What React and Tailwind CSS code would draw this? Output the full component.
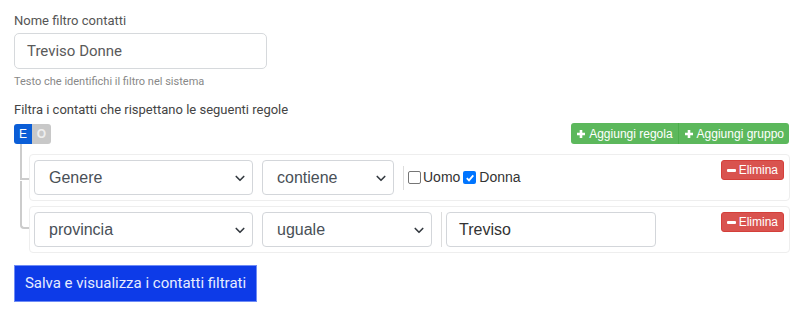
import React from "react";

const roboto = { fontFamily: "Roboto, 'Liberation Sans', sans-serif" };
const arial = { fontFamily: "'Liberation Sans', Arial, sans-serif" };

function Chevron() {
  return (
    <svg width="12" height="12" viewBox="0 0 16 16" className="shrink-0">
      <path d="M3 6l5 5 5-5" fill="none" stroke="#343a40" strokeWidth="2.2" strokeLinecap="round" strokeLinejoin="round" />
    </svg>
  );
}

function FakeSelect({ value, width }) {
  return (
    <div
      className={`flex items-center justify-between h-[35px] pl-[14px] pr-[6px] border border-[#d3d6da] rounded-[4px] bg-white text-[16px] text-[#495057] ${width}`}
      style={arial}
    >
      <span>{value}</span>
      <Chevron />
    </div>
  );
}

function DeleteButton() {
  return (
    <button
      className="flex items-center gap-[3px] h-[20px] px-[5px] rounded-[3px] bg-[#d9534f] border border-[#d43f3a] text-white text-[12px]"
      style={arial}
    >
      <span className="block w-[9px] h-[3px] bg-white rounded-[1px]" />
      Elimina
    </button>
  );
}

function Plus() {
  return (
    <svg width="10" height="10" viewBox="0 0 10 10">
      <path d="M5 1v8M1 5h8" stroke="white" strokeWidth="2.6" />
    </svg>
  );
}

function RuleRow({ children, last }) {
  return (
    <div className="relative">
      <div
        className={`absolute left-[-9px] w-[9px] border-l-2 border-b-2 border-[#cccccc] ${
          last ? "top-[-25px] h-[48px] rounded-bl-[4px]" : "top-[-10px] h-[36px]"
        }`}
      />
      <div className="flex items-start justify-between h-[47px] pl-[4px] pr-[5px] pt-[5px] border border-[#eeeeee] rounded-[4px] bg-white">
        <div className="flex items-center gap-[9px]">{children}</div>
        <DeleteButton />
      </div>
    </div>
  );
}

export default function App() {
  return (
    <div className="w-[800px] h-[313px] bg-white px-[14px] pt-[12px]" style={roboto}>
      <label className="block text-[13px] text-[#555] leading-[18px]">Nome filtro contatti</label>
      <div className="mt-[3px] w-[253px] h-[36px] border border-[#d6d9dc] rounded-[5px] flex items-center px-[12px] text-[15px] text-[#5a5a5a]">
        Treviso Donne
      </div>
      <p className="mt-[5px] text-[11px] text-[#888] leading-[16px]">Testo che identifichi il filtro nel sistema</p>
      <p className="mt-[11px] text-[13px] text-[#444] leading-[18px]">Filtra i contatti che rispettano le seguenti regole</p>

      <div className="mt-[4px] flex items-center justify-between w-[775px]">
        <div className="flex h-[20px] rounded-[3px] overflow-hidden text-[12px]" style={arial}>
          <span className="w-[18px] bg-[#0b5ed7] text-white flex items-center justify-center">E</span>
          <span className="w-[19px] bg-[#c8c8c8] text-[#eee] flex items-center justify-center font-bold">O</span>
        </div>
        <div className="flex h-[21px] rounded-[3px] overflow-hidden text-[12px] text-white" style={arial}>
          <button className="flex items-center gap-[3px] px-[5px] bg-[#5cb85c] border-r border-[#4cae4c]">
            <Plus />
            Aggiungi regola
          </button>
          <button className="flex items-center gap-[3px] px-[5px] bg-[#5cb85c]">
            <Plus />
            Aggiungi gruppo
          </button>
        </div>
      </div>

      <div className="relative ml-[15px] mt-[10px] w-[761px] flex flex-col gap-[5px]">
        <RuleRow>
          <FakeSelect value="Genere" width="w-[219px]" />
          <FakeSelect value="contiene" width="w-[132px]" />
          <div className="flex items-center gap-[3px] border-l border-[#ddd] pl-[4px] h-[24px] text-[14px] text-[#333]" style={arial}>
            <span className="inline-flex items-center gap-[2px]">
              <span className="w-[13px] h-[13px] border border-[#767676] rounded-[2px] bg-white" />
              Uomo
            </span>
            <span className="inline-flex items-center gap-[3px]">
              <span className="w-[13px] h-[13px] rounded-[2px] bg-[#0075ff] flex items-center justify-center">
                <svg width="10" height="10" viewBox="0 0 10 10">
                  <path d="M1.8 5.2l2.2 2.2 4.3-5" fill="none" stroke="white" strokeWidth="1.8" />
                </svg>
              </span>
              Donna
            </span>
          </div>
        </RuleRow>
        <RuleRow last>
          <FakeSelect value="provincia" width="w-[219px]" />
          <FakeSelect value="uguale" width="w-[170px]" />
          <div className="border-l border-[#ddd] pl-[4px] h-[35px] flex items-center">
            <div className="w-[210px] h-[35px] border border-[#d3d6da] rounded-[4px] flex items-center px-[12px] text-[16px] text-[#333]" style={arial}>
              Treviso
            </div>
          </div>
        </RuleRow>
      </div>

      <button className="mt-[12px] w-[243px] h-[37px] bg-[#0d3be8] border border-[#6f8cf5] text-[15px] text-[#e6ecff]" style={roboto}>
        Salva e visualizza i contatti filtrati
      </button>
    </div>
  );
}
